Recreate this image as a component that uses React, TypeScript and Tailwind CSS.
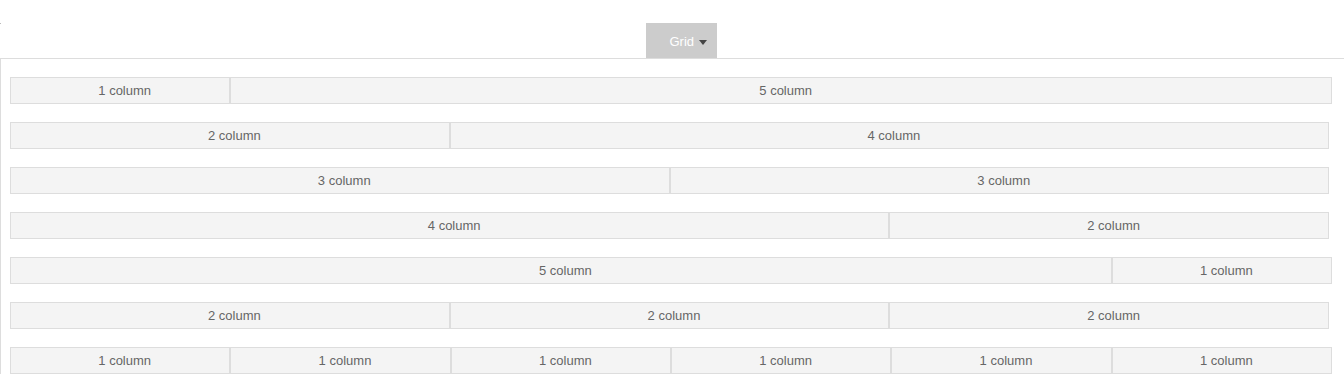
const rows: { spans: number[]; width: string }[] = [
  { spans: [1, 5], width: "w-[1322px]" },
  { spans: [2, 4], width: "w-[1319px]" },
  { spans: [3, 3], width: "w-[1319px]" },
  { spans: [4, 2], width: "w-[1319px]" },
  { spans: [5, 1], width: "w-[1322px]" },
  { spans: [2, 2, 2], width: "w-[1319px]" },
  { spans: [1, 1, 1, 1, 1, 1], width: "w-[1322px]" },
];

const spanClass: Record<number, string> = {
  1: "col-span-1",
  2: "col-span-2",
  3: "col-span-3",
  4: "col-span-4",
  5: "col-span-5",
  6: "col-span-6",
};

function Cell({ span }: { span: number }) {
  return (
    <div
      className={`${spanClass[span]} flex h-[27px] items-center justify-center border border-[#dddddd] bg-[#f4f4f4] pl-[9px] text-[13px] text-[#666666]`}
    >
      {span} column
    </div>
  );
}

export default function App() {
  return (
    <div
      className="h-[390px] w-[1344px] overflow-hidden bg-white"
      style={{ fontFamily: '"Liberation Sans", Arial, sans-serif' }}
    >
      <div className="relative flex h-[58px] items-end justify-center">
        <span className="absolute left-0 top-[23px] h-px w-px bg-[#bbbbbb]" />
        <button className="ml-[18px] flex h-[35px] w-[71px] items-center bg-[#cccccc] pl-[24px] pt-[2px] text-[13px] text-white">
          Grid
          <svg className="ml-[5px] mt-[1px]" width="8" height="5" viewBox="0 0 8 5">
            <path d="M0 0h8L4 5z" fill="#444444" />
          </svg>
        </button>
      </div>
      <div className="flex flex-col gap-[18px] border-l border-t border-[#dddddd] pl-[9px] pt-[18px]">
        {rows.map((row, i) => (
          <div key={i} className={`grid grid-cols-6 ${row.width}`}>
            {row.spans.map((s, j) => (
              <Cell key={j} span={s} />
            ))}
          </div>
        ))}
      </div>
    </div>
  );
}
